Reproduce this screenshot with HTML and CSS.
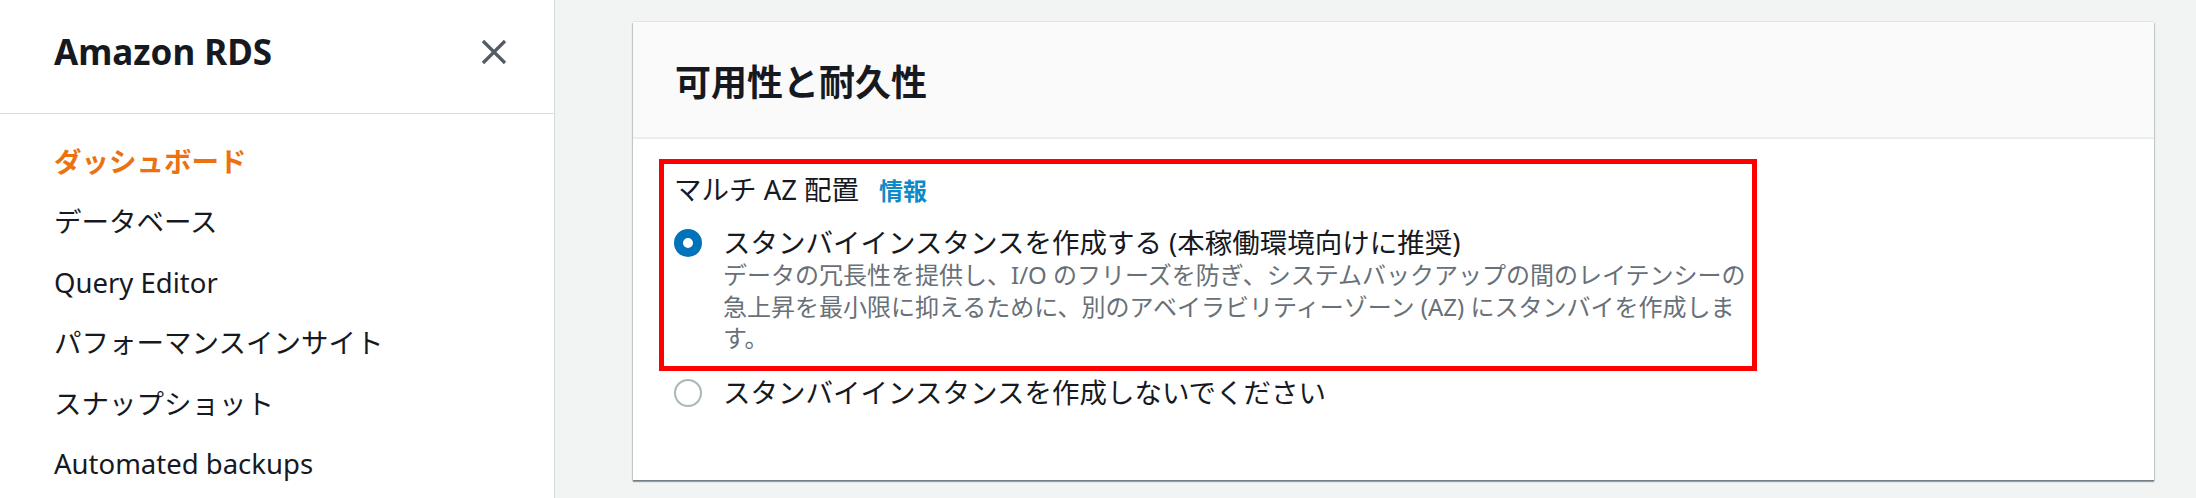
FILE: index.html
```html
<!DOCTYPE html>
<html lang="ja">
<head>
<meta charset="utf-8">
<title>Amazon RDS</title>
<link rel="stylesheet" href="styles.css">
</head>
<body>
<div class="layout">
  <aside class="sidebar">
    <div class="side-head">
      <span class="side-title">Amazon RDS</span>
      <svg class="close" width="26" height="26" viewBox="0 0 26 26" aria-hidden="true">
        <path d="M2 2 L24 24 M24 2 L2 24" stroke="#545b64" stroke-width="3.2" fill="none" stroke-linecap="butt"/>
      </svg>
    </div>
    <nav class="nav">
      <div class="nav-item active">ダッシュボード</div>
      <div class="nav-item">データベース</div>
      <div class="nav-item">Query Editor</div>
      <div class="nav-item">パフォーマンスインサイト</div>
      <div class="nav-item">スナップショット</div>
      <div class="nav-item">Automated backups</div>
    </nav>
  </aside>
  <main class="main">
    <section class="card">
      <div class="card-head"><h2 class="card-title">可用性と耐久性</h2></div>
      <div class="card-body">
        <div class="highlight">
          <div class="field-label">マルチ AZ 配置<span class="info">情報</span></div>
          <div class="option">
            <span class="radio checked"></span>
            <div class="opt-text">
              <div class="opt-title">スタンバイインスタンスを作成する (本稼働環境向けに推奨)</div>
              <div class="opt-desc">データの冗長性を提供し、I/O のフリーズを防ぎ、システムバックアップの間のレイテンシーの急上昇を最小限に抑えるために、別のアベイラビリティーゾーン (AZ) にスタンバイを作成します。</div>
            </div>
          </div>
        </div>
        <div class="option option-plain">
          <span class="radio"></span>
          <div class="opt-text">
            <div class="opt-title">スタンバイインスタンスを作成しないでください</div>
          </div>
        </div>
      </div>
    </section>
  </main>
</div>
</body>
</html>
```

FILE: styles.css
```css
* { box-sizing: border-box; }
html, body { margin: 0; padding: 0; }
body {
  background: #f2f3f3;
  font-family: "Noto Sans", "Noto Sans CJK JP", sans-serif;
  color: #16191f;
  width: 2196px;
  height: 498px;
  overflow: hidden;
}
.layout {
  display: flex;
  height: 498px;
}
.sidebar {
  width: 555px;
  flex: none;
  background: #fff;
  border-right: 1px solid #d5dbdb;
  height: 100%;
}
.side-head {
  height: 114px;
  border-bottom: 1px solid #d5dbdb;
  display: flex;
  justify-content: space-between;
  align-items: flex-start;
  padding: 28px 47px 0 54px;
}
.side-title {
  font-size: 35px;
  font-weight: 700;
  line-height: 48px;
  color: #16191f;
}
.close { margin-top: 11px; display: block; }
.nav {
  padding: 18px 0 0 54px;
}
.nav-item {
  font-size: 27.5px;
  line-height: 60.4px;
  color: #16191f;
  white-space: nowrap;
}
.nav-item.active {
  color: #ec7211;
  font-weight: 700;
}
.main {
  flex: 1;
  padding: 22px 42px 0 78px;
}
.card {
  background: #fff;
  box-shadow: 0 2px 1px 0 rgba(0, 28, 36, 0.35), 1px 1px 1px 0 rgba(0, 28, 36, 0.15), -1px 1px 1px 0 rgba(0, 28, 36, 0.15), 0 -1px 0 0 rgba(0, 28, 36, 0.06);
}
.card-head {
  background: #fafafa;
  height: 117px;
  border-bottom: 2px solid #eaeded;
  display: flex;
  align-items: center;
  padding: 0 42px;
}
.card-title {
  margin: 0;
  font-size: 36px;
  font-weight: 700;
  line-height: 48px;
  font-family: "Noto Sans CJK JP", sans-serif;
}
.card-body {
  padding: 20px 0 71px 26px;
}
.highlight {
  width: 1098px;
  border: 5px solid #ff0000;
  padding: 10px 0 12px 10px;
}
.field-label {
  font-size: 27.5px;
  line-height: 32px;
  color: #16191f;
}
.info {
  color: #0e8ac6;
  font-weight: 700;
  font-size: 24px;
  margin-left: 20px;
}
.option {
  display: flex;
  align-items: flex-start;
  gap: 21px;
  margin-top: 20px;
}
.option-plain {
  margin-top: 6px;
  padding-left: 15px;
}
.radio {
  flex: none;
  width: 28px;
  height: 28px;
  margin-top: 2px;
  border-radius: 50%;
  border: 2px solid #aab7b8;
  background: #fff;
}
.radio.checked {
  border: 9px solid #0073bb;
}
.opt-text {
  width: 1029px;
}
.opt-title {
  font-size: 27.5px;
  line-height: 32px;
  color: #16191f;
}
.opt-desc {
  font-size: 24px;
  line-height: 31.5px;
  color: #687078;
}
```
